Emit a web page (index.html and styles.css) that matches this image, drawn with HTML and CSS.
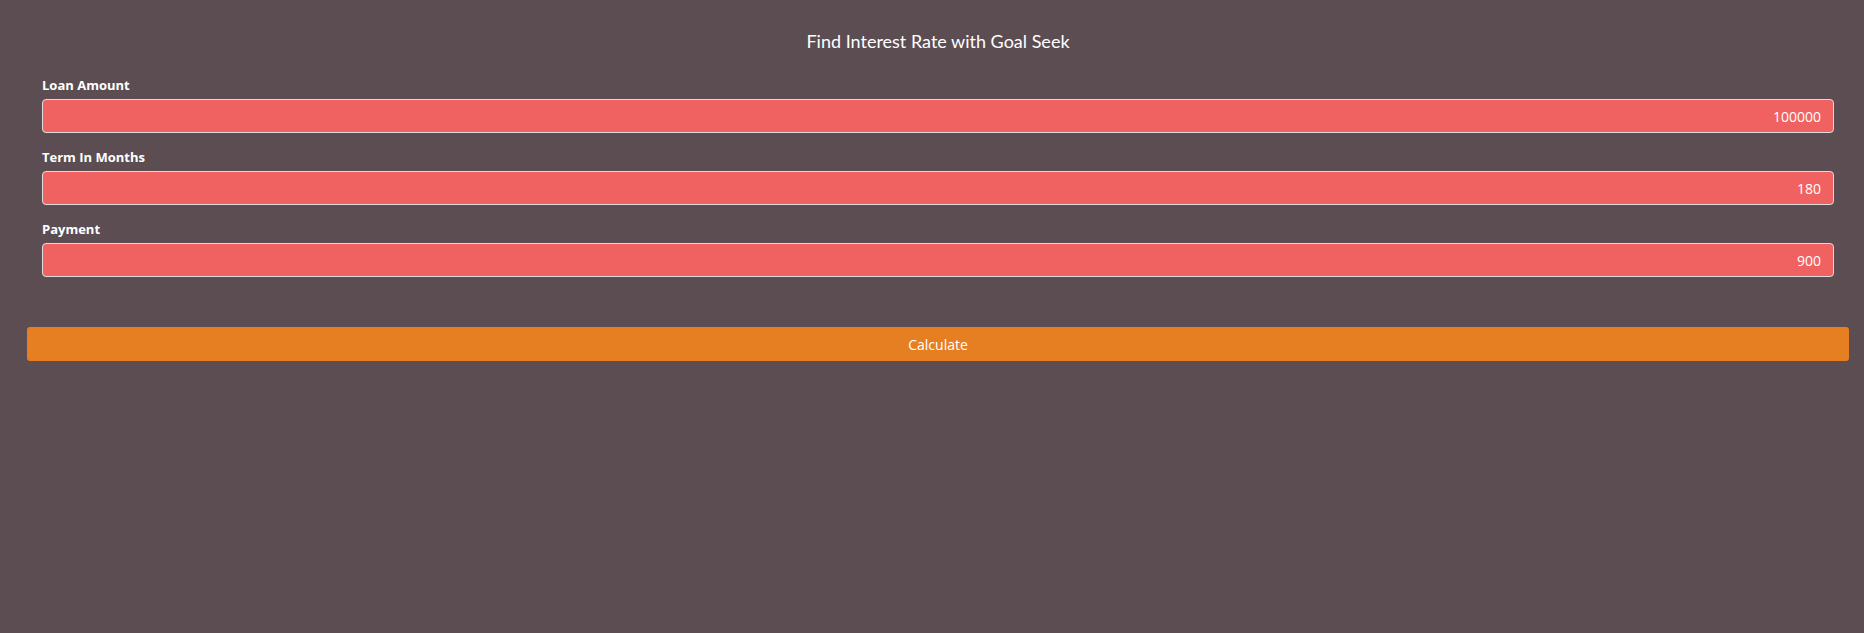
FILE: index.html
```html
<!DOCTYPE html>
<html lang="en">
<head>
    <meta charset="UTF-8">
    <meta name="viewport" content="width=device-width, initial-scale=1.0">
    <title>Find Interest Rate with Goal Seek</title>
    <link rel="stylesheet" href="styles.css">
</head>
<body>

    <div class="page">
        <h2 class="title">Find Interest Rate with Goal Seek</h2>

        <form class="calc-form">
            <div class="field">
                <label for="loanAmount">Loan Amount</label>
                <input type="text" id="loanAmount" value="100000">
            </div>
            <div class="field">
                <label for="termMonths">Term In Months</label>
                <input type="text" id="termMonths" value="180">
            </div>
            <div class="field">
                <label for="payment">Payment</label>
                <input type="text" id="payment" value="900">
            </div>

            <button type="button" class="btn">Calculate</button>
        </form>
    </div>

</body>
</html>
```

FILE: styles.css
```css
body {
    margin: 0;
    padding: 0;
    background-color: #5c4d53;
    color: white;
    font-family: 'Open Sans', 'Noto Sans', sans-serif;
}

.page {
    padding: 0 15px 0 27px;
}

.title {
    margin: 0;
    padding-top: 31px;
    font-family: Lato, 'Open Sans', sans-serif;
    font-size: 18px;
    font-weight: normal;
    line-height: 20px;
    text-align: center;
}

.calc-form {
    margin-top: 25px;
}

.field {
    padding: 0 15px;
    margin-bottom: 15px;
}

.field label {
    display: block;
    margin-bottom: 5px;
    font-size: 13px;
    font-weight: bold;
    line-height: 18px;
}

.field input {
    display: block;
    box-sizing: border-box;
    width: 100%;
    height: 34px;
    padding: 0 12px;
    background-color: #f06262;
    border: 1px solid #dcdcdc;
    border-radius: 4px;
    color: white;
    font-family: 'Open Sans', sans-serif;
    font-size: 14px;
    text-align: right;
    outline: none;
}

.btn {
    display: block;
    width: 100%;
    height: 34px;
    margin-top: 50px;
    background-color: #e67e22;
    border: none;
    border-radius: 3px;
    color: white;
    font-family: 'Open Sans', sans-serif;
    font-size: 14px;
    cursor: pointer;
}

.btn:hover {
    background-color: #d35400;
}
```
